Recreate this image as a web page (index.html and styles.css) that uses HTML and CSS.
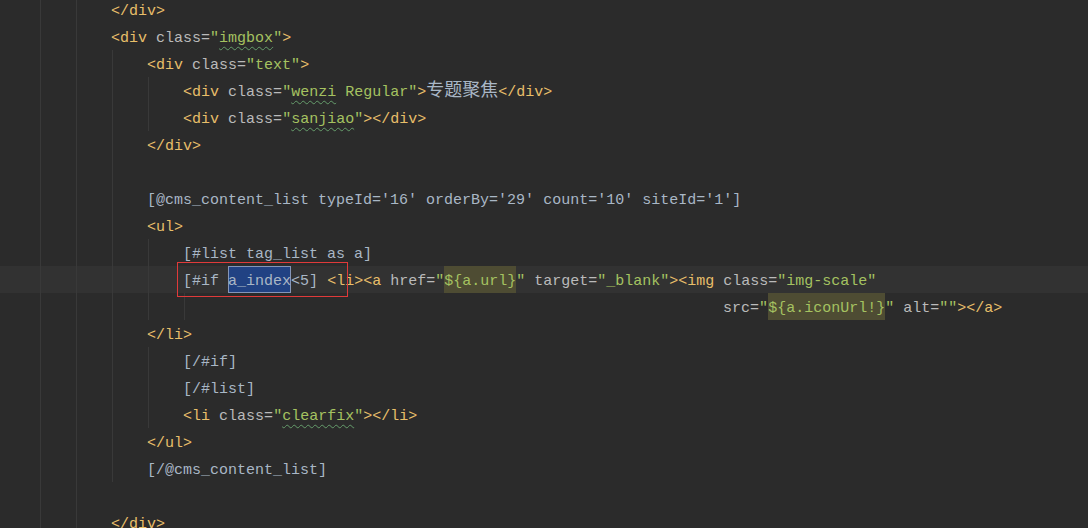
FILE: index.html
```html
<!DOCTYPE html>
<html>
<head>
<meta charset="utf-8">
<link rel="stylesheet" href="styles.css">
</head>
<body>
<div class="editor">
  <div class="code">
    <div class="line"><span class="ind">    </span><span class="ind g">    </span><span class="ind g">    </span><span class="t">&lt;/div&gt;</span></div>
    <div class="line"><span class="ind">    </span><span class="ind g">    </span><span class="ind g">    </span><span class="t">&lt;div</span> <span class="a">class=</span><span class="s">"<span class="w">imgbox</span>"</span><span class="t">&gt;</span></div>
    <div class="line"><span class="ind">    </span><span class="ind g">    </span><span class="ind g">    </span><span class="ind g">    </span><span class="t">&lt;div</span> <span class="a">class=</span><span class="s">"text"</span><span class="t">&gt;</span></div>
    <div class="line"><span class="ind">    </span><span class="ind g">    </span><span class="ind g">    </span><span class="ind g">    </span><span class="ind g">    </span><span class="t">&lt;div</span> <span class="a">class=</span><span class="s">"<span class="w">wenzi</span> Regular"</span><span class="t">&gt;</span><span class="cjk">专题聚焦</span><span class="t">&lt;/div&gt;</span></div>
    <div class="line"><span class="ind">    </span><span class="ind g">    </span><span class="ind g">    </span><span class="ind g">    </span><span class="ind g">    </span><span class="t">&lt;div</span> <span class="a">class=</span><span class="s">"<span class="w">sanjiao</span>"</span><span class="t">&gt;&lt;/div&gt;</span></div>
    <div class="line"><span class="ind">    </span><span class="ind g">    </span><span class="ind g">    </span><span class="ind g">    </span><span class="t">&lt;/div&gt;</span></div>
    <div class="line"><span class="ind">    </span><span class="ind g">    </span><span class="ind g">    </span><span class="ind g">    </span></div>
    <div class="line"><span class="ind">    </span><span class="ind g">    </span><span class="ind g">    </span><span class="ind g">    </span><span class="x">[@cms_content_list typeId='16' orderBy='29' count='10' siteId='1']</span></div>
    <div class="line"><span class="ind">    </span><span class="ind g">    </span><span class="ind g">    </span><span class="ind g">    </span><span class="t">&lt;ul&gt;</span></div>
    <div class="line"><span class="ind">    </span><span class="ind g">    </span><span class="ind g">    </span><span class="ind g">    </span><span class="ind g">    </span><span class="x">[#list tag_list as a]</span></div>
    <div class="line cur"><span class="ind">    </span><span class="ind g">    </span><span class="ind g">    </span><span class="ind g">    </span><span class="ind g">    </span><span class="x">[#if </span><span class="sel">a_index</span><span class="x">&lt;5] </span><span class="t">&lt;li&gt;&lt;a</span> <span class="a">href=</span><span class="s">"<span class="tpl">${a.url}</span>"</span> <span class="a">target=</span><span class="s">"_blank"</span><span class="t">&gt;&lt;img</span> <span class="a">class=</span><span class="s">"img-scale"</span></div>
    <div class="line"><span class="ind">    </span><span class="ind g">    </span><span class="ind g">    </span><span class="ind g">    </span><span class="ind g">    </span><span class="ind g">    </span><span class="cont"></span><span class="a">src=</span><span class="s">"<span class="tpl">${a.iconUrl!}</span>"</span> <span class="a">alt=</span><span class="s">""</span><span class="t">&gt;&lt;/a&gt;</span></div>
    <div class="line"><span class="ind">    </span><span class="ind g">    </span><span class="ind g">    </span><span class="ind g">    </span><span class="t">&lt;/li&gt;</span></div>
    <div class="line"><span class="ind">    </span><span class="ind g">    </span><span class="ind g">    </span><span class="ind g">    </span><span class="ind g">    </span><span class="x">[/#if]</span></div>
    <div class="line"><span class="ind">    </span><span class="ind g">    </span><span class="ind g">    </span><span class="ind g">    </span><span class="ind g">    </span><span class="x">[/#list]</span></div>
    <div class="line"><span class="ind">    </span><span class="ind g">    </span><span class="ind g">    </span><span class="ind g">    </span><span class="ind g">    </span><span class="t">&lt;li</span> <span class="a">class=</span><span class="s">"<span class="w">clearfix</span>"</span><span class="t">&gt;&lt;/li&gt;</span></div>
    <div class="line"><span class="ind">    </span><span class="ind g">    </span><span class="ind g">    </span><span class="ind g">    </span><span class="t">&lt;/ul&gt;</span></div>
    <div class="line"><span class="ind">    </span><span class="ind g">    </span><span class="ind g">    </span><span class="ind g">    </span><span class="x">[/@cms_content_list]</span></div>
    <div class="line"><span class="ind">    </span><span class="ind g">    </span><span class="ind g">    </span></div>
    <div class="line"><span class="ind">    </span><span class="ind g">    </span><span class="ind g">    </span><span class="t">&lt;/div&gt;</span></div>
  </div>
  <div class="mark"></div>
</div>
</body>
</html>
```

FILE: styles.css
```css
html, body {
  margin: 0;
  padding: 0;
  background: #2b2b2b;
  overflow: hidden;
}

.editor {
  position: relative;
  width: 1088px;
  height: 528px;
  overflow: hidden;
  background: #2b2b2b;
  font-family: "Liberation Mono", "DejaVu Sans Mono", monospace;
  font-size: 15px;
  color: #a9b7c6;
}

.code {
  margin-top: -4px;
}

.line {
  height: 27px;
  line-height: 31px;
  white-space: pre;
  padding-left: 3px;
}

.line.cur {
  background: #323232;
}

.ind {
  display: inline-block;
  vertical-align: top;
  height: 27px;
}

.cont {
  display: inline-block;
  vertical-align: top;
  width: 504px;
  height: 27px;
}

.g {
  background: linear-gradient(#393939, #393939) 1px 0 / 1px 100% no-repeat;
}

.t { color: #e8bf6a; }
.a { color: #bababa; }
.s { color: #a5c261; }
.x { color: #a9b7c6; }

.w {
  text-decoration-line: underline;
  text-decoration-style: wavy;
  text-decoration-color: #659c6b;
  text-decoration-thickness: 1px;
  text-underline-offset: 4px;
}

.cjk {
  font-family: "Noto Sans CJK SC", sans-serif;
  font-size: 18px;
  line-height: 1;
  color: #a9b7c6;
}

.sel {
  display: inline-block;
  vertical-align: top;
  height: 27px;
  background: #214283;
  box-shadow: inset 0 0 0 1px #8596b8;
  color: #a9b7c6;
}

.tpl {
  display: inline-block;
  vertical-align: top;
  height: 27px;
  background: #4e4c33;
}

.mark {
  position: absolute;
  left: 177px;
  top: 262px;
  width: 169px;
  height: 33px;
  border: 1px solid #e03a3a;
}
```
